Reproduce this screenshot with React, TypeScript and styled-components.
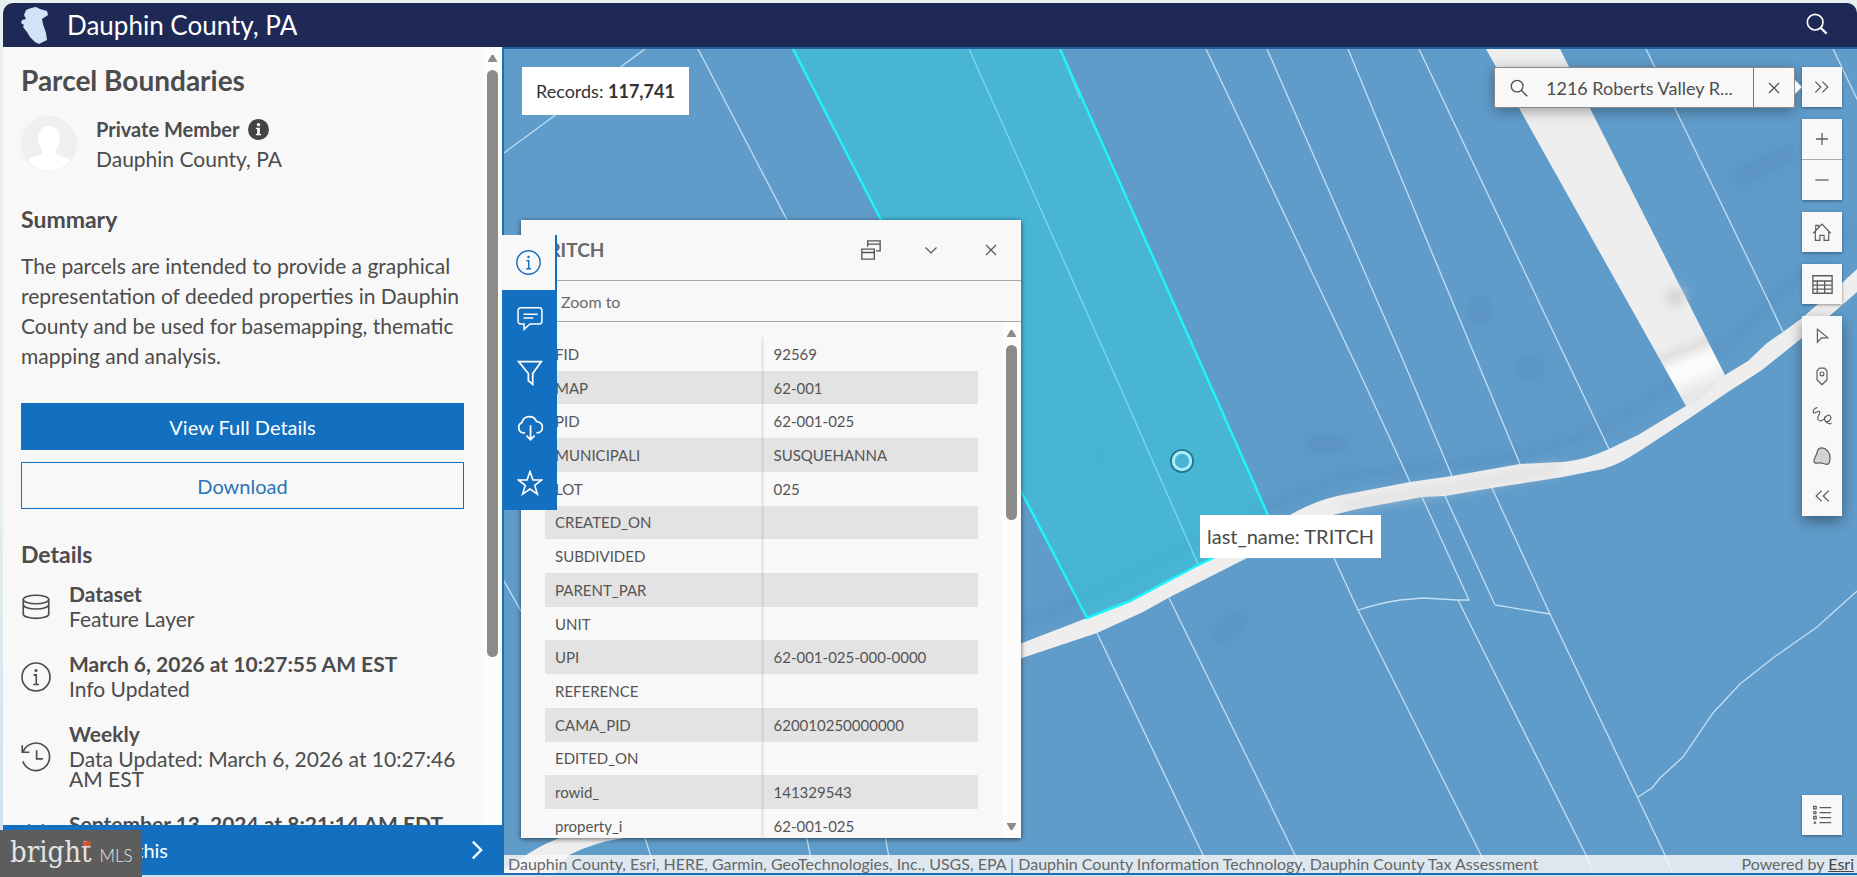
import React from "react";
import styled, { createGlobalStyle, css } from "styled-components";

const blue = "#136fbf";
const ink = "#4c4c4c";
const paper = "#f8f8f8";

const GlobalStyle = createGlobalStyle`
  * { box-sizing: border-box; }
  body { margin: 0; font-family: Lato, "Open Sans", sans-serif; color: ${ink}; background: #e9f0f0; }
  button, input { font: inherit; color: inherit; }
  button { border: 0; padding: 0; background: none; cursor: pointer; }
  h1, h2, h3, p { margin: 0; }
`;

const Page = styled.div`
  display: flex;
  flex-direction: column;
  height: 100vh;
  min-height: 480px;
  padding: 3px 0 2px 3px;
  overflow: hidden;
  background: linear-gradient(#e9f0f0 50%, #cfdfec 100%);
`;

const Header = styled.header`
  flex: none;
  display: flex;
  align-items: center;
  height: 44px;
  padding: 0 29px 0 17px;
  border-radius: 10px 10px 0 0;
  background: #1e2955;
  color: #fff;
`;

const SiteName = styled.a`
  display: flex;
  align-items: center;
  gap: 17px;
  margin-right: auto;
  font-size: 26px;
  line-height: 30px;
  color: inherit;
  text-decoration: none;
`;

const Body = styled.main`
  flex: 1;
  display: flex;
  min-height: 0;
`;

const Side = styled.aside`
  position: relative;
  flex: none;
  display: flex;
  flex-direction: column;
  width: 499px;
  background: ${paper};
`;

const SideScroll = styled.div`
  flex: 1;
  display: flex;
  min-height: 0;
  overflow: hidden;
`;

const SideContent = styled.div`
  flex: 1;
  padding: 17px 19px 0 18px;
`;

const ScrollTrack = styled.div`
  flex: none;
  display: flex;
  flex-direction: column;
  align-items: center;
  justify-content: space-between;
  width: 19px;
  padding: 8px 0;
  background: #fcfcfc;
`;

const ScrollTop = styled.div`
  display: flex;
  flex-direction: column;
  align-items: center;
  gap: 8px;
`;

const Thumb = styled.div<{ $length: number }>`
  width: 11px;
  height: ${(p) => p.$length}px;
  border-radius: 6px;
  background: #8b8b8b;
`;

const ScrollArrow = styled.div<{ $down?: boolean }>`
  width: 10px;
  height: 7px;
  background: #8b8b8b;
  clip-path: ${(p) =>
    p.$down ? "polygon(0 0, 100% 0, 60% 100%, 40% 100%)" : "polygon(40% 0, 60% 0, 100% 100%, 0 100%)"};
`;

const Title = styled.h1`
  font-size: 28px;
  line-height: 32px;
  font-weight: 700;
`;

const Member = styled.div`
  display: flex;
  align-items: center;
  gap: 19px;
  margin-top: 18px;
`;

const MemberText = styled.div`
  font-size: 21px;
  line-height: 30px;
`;

const MemberName = styled.div`
  display: flex;
  align-items: center;
  gap: 8px;
  font-size: 20px;
  font-weight: 700;
`;

const Heading = styled.h2`
  font-size: 23px;
  line-height: 26px;
  font-weight: 700;
`;

const Summary = styled.section`
  margin-top: 32px;
`;

const SummaryText = styled.p`
  margin-top: 19px;
  font-size: 21px;
  line-height: 30px;
`;

const Actions = styled.div`
  display: flex;
  flex-direction: column;
  gap: 12px;
  margin: 32px 0;
`;

const ActionButton = styled.button<{ $outline?: boolean }>`
  height: 47px;
  font-size: 20px;
  border: 1px solid ${blue};
  background: ${(p) => (p.$outline ? paper : blue)};
  color: ${(p) => (p.$outline ? "#2b74b5" : "#fff")};
`;

const DetailList = styled.ul`
  display: flex;
  flex-direction: column;
  gap: 20px;
  margin: 12px 0 0;
  padding: 0;
  list-style: none;
`;

const Detail = styled.li`
  display: flex;
  align-items: center;
  gap: 18px;
  font-size: 21px;
  line-height: 20px;

  svg { flex: none; margin-top: 6px; }
  strong { display: block; line-height: 30px; }
`;

const UseBar = styled.button`
  flex: none;
  display: flex;
  align-items: center;
  justify-content: space-between;
  height: 50px;
  padding: 0 15px;
  background: ${blue};
  color: #fff;
  font-size: 20px;
`;

const Rail = styled.nav`
  position: absolute;
  z-index: 3;
  top: 188px;
  left: 499px;
  width: 55px;
  display: flex;
  flex-direction: column;
  background: ${blue};
`;

const RailButton = styled.button<{ $active?: boolean }>`
  display: grid;
  place-items: center;
  height: 55px;
  color: #fff;
  ${(p) =>
    p.$active &&
    css`
      background: ${paper};
      color: ${blue};
      border-right: 2px solid ${blue};
    `}
`;

const MapView = styled.section`
  position: relative;
  flex: 1;
  min-width: 0;
  border: 2px solid #226cb0;
  border-right: 0;
  border-top-color: #285f9f;
  overflow: hidden;
  background: #609cca;
`;

const MapDrawing = styled.svg`
  position: absolute;
  inset: 0;
  width: 100%;
  height: 100%;
`;

const Records = styled.div`
  position: absolute;
  top: 18px;
  left: 18px;
  padding: 13px 14px;
  background: #fff;
  color: #323232;
  font-size: 18px;
  line-height: 22px;
`;

const Popup = styled.section`
  position: absolute;
  top: 171px;
  bottom: 35px;
  left: 17px;
  width: 500px;
  display: flex;
  flex-direction: column;
  background: ${paper};
  box-shadow: 0 1px 5px rgba(0, 0, 0, 0.6);
  color: #555;
`;

const PopupHead = styled.header`
  flex: none;
  display: flex;
  align-items: center;
  height: 61px;
  padding-left: 16px;
  border-bottom: 1px solid #a8a8a8;
`;

const PopupTitle = styled.h3`
  flex: 1;
  font-size: 19px;
  line-height: 24px;
  font-weight: 700;
  color: #6a6a6a;
`;

const HeadButton = styled.button`
  display: grid;
  place-items: center;
  width: 60px;
  height: 60px;
`;

const PopupActions = styled.div`
  flex: none;
  display: flex;
  align-items: center;
  height: 41px;
  padding-left: 40px;
  border-bottom: 1px solid #a8a8a8;
  font-size: 16px;
  color: #6a6a6a;
`;

const PopupScroll = styled.div`
  flex: 1;
  display: flex;
  min-height: 0;
  overflow: hidden;
`;

const PopupContent = styled.div`
  flex: 1;
  padding: 15px 24px 0;
`;

const Fields = styled.table`
  width: 100%;
  height: 506px;
  border-collapse: collapse;
  table-layout: fixed;
  font-size: 15px;
  line-height: 20px;

  tr:nth-child(even) { background: #e3e3e3; }
  th, td { padding: 0 10px; text-align: left; font-weight: 400; }
  th { width: 217px; border-right: 3px solid rgba(0, 0, 0, 0.06); }
`;

const MapTip = styled.div`
  position: absolute;
  top: 466px;
  left: 696px;
  padding: 8px 7px;
  background: #fff;
  color: #4a4a4a;
  font-size: 20px;
  line-height: 27px;
  white-space: nowrap;
`;

const Tools = styled.div`
  position: absolute;
  top: 18px;
  right: 15px;
  display: flex;
  flex-direction: column;
  gap: 12px;
`;

const ToolGroup = styled.div`
  display: flex;
  flex-direction: column;
  background: ${paper};
  box-shadow: 0 1px 3px rgba(0, 0, 0, 0.4);
`;

const ZoomGroup = styled(ToolGroup)`
  gap: 1px;
  background: #a9a9a9;
  button { background: ${paper}; }
`;

const SketchGroup = styled(ToolGroup)`
  box-shadow: 0 5px 14px rgba(0, 0, 0, 0.4);
`;

const Tool = styled.button`
  display: grid;
  place-items: center;
  width: 40px;
  height: 40px;
  color: #5c5c5c;
`;

const LegendCorner = styled(ToolGroup)`
  position: absolute;
  right: 15px;
  bottom: 38px;
`;

const SearchBox = styled.form`
  position: absolute;
  top: 18px;
  right: 62px;
  display: flex;
  align-items: center;
  width: 301px;
  height: 41px;
  border: 1px solid #8a8a8a;
  border-radius: 2px;
  background: ${paper};
  box-shadow: 0 3px 14px rgba(0, 0, 0, 0.35);
  color: #4f4f4f;

  &::after {
    content: "";
    position: absolute;
    top: 12px;
    right: -8px;
    width: 7px;
    height: 14px;
    background: ${paper};
    clip-path: polygon(0 0, 100% 50%, 0 100%);
  }
`;

const SearchGo = styled.button`
  display: grid;
  place-items: center;
  width: 48px;
  height: 39px;
`;

const SearchInput = styled.input`
  flex: 1;
  min-width: 0;
  padding: 0 0 0 3px;
  border: 0;
  outline: 0;
  background: none;
  font-size: 18px;
`;

const SearchClear = styled.button`
  display: grid;
  place-items: center;
  width: 41px;
  height: 39px;
  border-left: 1px solid #777;
`;

const Attribution = styled.footer`
  position: absolute;
  right: 0;
  bottom: 0;
  left: 0;
  display: flex;
  justify-content: space-between;
  height: 18px;
  padding: 0 3px 0 4px;
  background: rgba(248, 248, 248, 0.82);
  color: #666;
  font-size: 16px;
  line-height: 18px;
  white-space: nowrap;

  a { color: #444; }
`;

const Watermark = styled.div`
  position: absolute;
  z-index: 4;
  bottom: 0;
  left: 0;
  display: flex;
  align-items: baseline;
  gap: 8px;
  width: 142px;
  height: 47px;
  padding: 0 0 0 10px;
  background: #5d5d5d;
  color: #e4e4e4;
  font-size: 17px;
  line-height: 44px;
  font-weight: 300;
`;

const WatermarkName = styled.span`
  position: relative;
  font-family: "DejaVu Serif Condensed", "DejaVu Serif", serif;
  font-size: 29px;
  font-weight: 400;

  svg { position: absolute; top: 9px; right: 0; }
`;

type IconProps = { size?: number; width?: number; children: React.ReactNode };
const Icon = ({ size = 24, width = 1, children }: IconProps) => (
  <svg width={size} height={size} viewBox="0 0 24 24" fill="none" stroke="currentColor" strokeWidth={width} aria-hidden="true">
    {children}
  </svg>
);

const InfoShape = () => (
  <>
    <circle cx="12" cy="12" r="11.2" />
    <circle cx="12" cy="6.7" r="1.2" fill="currentColor" stroke="none" />
    <path d="M10 10.3h2.2v7.6M9.8 18h4.6" />
  </>
);

const CrossIcon = () => (
  <Icon size={12} width={2.4}>
    <path d="M2 2l20 20M22 2L2 22" />
  </Icon>
);

const details = [
  {
    title: "Dataset",
    text: "Feature Layer",
    icon: (
      <Icon size={30} width={1.3}>
        <ellipse cx="12" cy="6" rx="10.2" ry="3.4" />
        <path d="M1.8 6v11.500c0 2 4.500 3.600 10.200 3.600s10.200-1.600 10.200-3.600V6M1.800 10c0 2 4.500 3.600 10.200 3.600s10.200-1.600 10.200-3.600" />
      </Icon>
    ),
  },
  {
    title: "March 6, 2026 at 10:27:55 AM EST",
    text: "Info Updated",
    icon: <Icon size={30} width={1.3}><InfoShape /></Icon>,
  },
  {
    title: "Weekly",
    text: "Data Updated: March 6, 2026 at 10:27:46 AM EST",
    icon: (
      <Icon size={30} width={1.3}>
        <path d="M1.800 7.500A11 11 0 1 1 1.500 15.500M1 2.500v5.700h5.700M12.500 6.500v7h5" />
      </Icon>
    ),
  },
  {
    title: "September 13, 2024 at 8:21:14 AM EDT",
    text: "Published Date",
    icon: (
      <Icon size={30} width={1.3}>
        <path d="M2 4.500h20v17H2zM2 9h20M6.500 1.500v5M17.500 1.500v5" />
      </Icon>
    ),
  },
];

const fields: [string, string][] = [
  ["FID", "92569"],
  ["MAP", "62-001"],
  ["PID", "62-001-025"],
  ["MUNICIPALI", "SUSQUEHANNA"],
  ["LOT", "025"],
  ["CREATED_ON", ""],
  ["SUBDIVIDED", ""],
  ["PARENT_PAR", ""],
  ["UNIT", ""],
  ["UPI", "62-001-025-000-0000"],
  ["REFERENCE", ""],
  ["CAMA_PID", "620010250000000"],
  ["EDITED_ON", ""],
  ["rowid_", "141329543"],
  ["property_i", "62-001-025"],
];

const sketchTools = [
  { label: "Select", icon: <path d="M6.500 4v15.500l4.500-5 8-.5z" /> },
  {
    label: "Draw a point",
    icon: (
      <>
        <path d="M6 6l3-3.500h6L18 6v10.500l-6 6-6-6z" strokeLinejoin="round" />
        <circle cx="12" cy="9.500" r="2.300" />
      </>
    ),
  },
  {
    label: "Draw a polyline",
    icon: <path d="M6.500 2c-2.500 0-5.500 3-5 5.500 1 3 5.500-2.500 7.500-1 2 2-4 7-1.500 10 2 2.500 5.500 1 7.500-1.500s4-5.500 6.500-3.500c2.500 2.300.5 7.300-3.500 7.300-3.300 0-4-3.800-2-6.300M15 16c1.500 4 5 6.500 8.500 4.800" />,
  },
  {
    label: "Draw a polygon",
    icon: <path d="M6.500 6.500c.5-2.500 2.500-4.200 5.500-4.200 4.500 0 9.500 5 9.700 11.500.1 4-.7 8.200-4.200 8.200-3.500 0-5-2-8-1.700-3 .3-7 1.200-7.300-1.800C2 14.500 6 11 6.500 6.500z" fill="#d2d2d2" />,
  },
  { label: "Collapse toolbar", icon: <path d="M11.500 5.500L5 12l6.500 6.500M20 5.500L13.500 12l6.500 6.500" strokeWidth="1.500" /> },
];

const roadPath =
  "M480 885L526 855Q545 843 562 837Q760 740 1022 643L1087 618L1130 601L1198 566L1250 536L1290 515Q1312 502 1337 496L1410 482L1452 476L1520 464L1563 462Q1585 460 1609 449L1638 435L1686 406L1725 375L1748 361L1767 343L1783 332L1802 318L1842 283L1900 229L1900 255L1857 292L1833 313L1762 370L1728 392L1687 420L1638 452Q1618 465 1603 469L1563 477L1492 488L1445 496L1422 497L1357 509L1333 515L1247 558L1170 597L1143 612L1097 633L1022 658Q760 760 624 838Q595 842 569 855L545 885Z";

const parcelLines =
  "M504 153L645 49M698 49L787 220L1000 560M969 49L1050 230L1117 380L1198 564M1060 49L1080 98" +
  "M1206 49L1363 380L1410 482M1267 49L1400 353L1452 476M1348 49L1435 260L1520 464M1419 49L1519 260L1609 449" +
  "M1646 49L1768 300L1783 332M1833 49L1857 99L1880 150M504 581L521 611L560 690M640 825L645 838L656 873" +
  "M804 825L814 873M883 825L892 873M1097 633L1203 855L1212 873M1169 598L1295 855L1304 873" +
  "M1334 558L1358 610L1481 855L1490 873M1358 610Q1380 603 1400 600L1423 598L1440 599L1457 600L1469 600L1422 497" +
  "M1458 600L1586 855L1593 873M1445 496L1495 605L1550 614M1492 488L1550 614L1665 855L1673 873" +
  "M1638 797L1652 788L1660 778L1683 757L1713 713L1740 684L1773 658L1817 627L1847 600L1890 562";

const ParcelMap = () => (
  <MapDrawing viewBox="504 49 1353 824" preserveAspectRatio="xMinYMin slice" role="img" aria-label="Parcel map">
    <defs>
      <filter id="soft" filterUnits="userSpaceOnUse" x="504" y="49" width="1353" height="824">
        <feGaussianBlur stdDeviation="6" />
      </filter>
      <linearGradient id="strip" gradientUnits="userSpaceOnUse" x1="1685" y1="338" x2="1706" y2="388">
        <stop offset="0" stopColor="#eee" />
        <stop offset="0.200" stopColor="#e0e0e0" />
        <stop offset="0.450" stopColor="#fbfbfb" />
        <stop offset="0.650" stopColor="#fbfbfb" />
        <stop offset="1" stopColor="#e8e8e8" />
      </linearGradient>
    </defs>
    <g filter="url(#soft)" fill="none" stroke="#3b6fa5">
      <path
        d="M1022 625L1130 575L1250 515L1340 476L1520 456L1600 430L1700 366L1857 225"
        strokeOpacity="0.200"
        strokeWidth="9"
      />
      <path
        d="M1305 444h45M1480 295v30M1515 368h30M1215 640l30-25M1092 455h14M1735 180l60-30"
        strokeWidth="20"
        strokeOpacity="0.180"
      />
    </g>
    <path d={roadPath} fill="#eee" />
    <path d="M1340 506L1460 486L1560 468" stroke="#d9d6d6" strokeWidth="5" fill="none" filter="url(#soft)" />
    <path d="M1486 49L1560 49L1687 300L1725 375L1700 400L1686 406L1604 260Z" fill="url(#strip)" />
    <circle cx="1675" cy="297" r="9" fill="#cfcfcf" filter="url(#soft)" />
    <path d={parcelLines} fill="none" stroke="#c3dff3" strokeWidth="1.300" />
    <path
      d="M793 49L881 220L1022 493L1087 618L1130 601L1198 565L1217 556L1273 527L1268 515L1208 380L1060 49"
      fill="#2fd2e0"
      fillOpacity="0.480"
      stroke="#1ff3fb"
      strokeWidth="2.500"
    />
    <circle cx="1182" cy="461" r="11" fill="none" stroke="#23758c" strokeWidth="2" />
    <circle cx="1182" cy="461" r="8.700" fill="#49b4d8" stroke="#a9edf8" strokeWidth="3" />
  </MapDrawing>
);

export default function App() {
  return (
    <>
      <GlobalStyle />
      <Page>
        <Header>
          <SiteName href="#home">
            <svg width="30" height="38" viewBox="0 0 30 38" aria-hidden="true">
              <path d="M6 4l5-2 5-1 4 2 7 2 1 4-6 4 1 5 3 9 1 7-8 4-4-2-5-5-3-5-4-5 1-2-3-2 1-3 4-1-2-4z" fill="#d3e3f7" />
            </svg>
            Dauphin County, PA
          </SiteName>
          <button aria-label="Search">
            <Icon size={22} width={1.800}>
              <circle cx="10" cy="10" r="8.500" />
              <path d="M16 16l6.500 6.500" strokeWidth="2.400" />
            </Icon>
          </button>
        </Header>

        <Body>
          <Side>
            <SideScroll>
              <SideContent>
                <Title>Parcel Boundaries</Title>
                <Member>
                  <svg width="56" height="56" viewBox="0 0 56 56" aria-hidden="true">
                    <clipPath id="face"><circle cx="28" cy="28" r="27" /></clipPath>
                    <circle cx="28" cy="28" r="28" fill="#efefef" />
                    <g clipPath="url(#face)" fill="#fff">
                      <path d="M28 10c7 0 11 5 11 12 0 5-2 9-4 11v4c2 4 16 4 19 12v10H2V49c3-8 17-8 19-12v-4c-2-2-4-6-4-11 0-7 4-12 11-12z" />
                    </g>
                  </svg>
                  <MemberText>
                    <MemberName>
                      Private Member
                      <svg width="21" height="21" viewBox="0 0 24 24" aria-hidden="true">
                        <circle cx="12" cy="12" r="12" fill="#444" />
                        <circle cx="12" cy="6.500" r="1.900" fill="#fff" />
                        <path d="M9 10h4.500v7H15v1.500H9V17h1.500v-5.500H9z" fill="#fff" />
                      </svg>
                    </MemberName>
                    <div>Dauphin County, PA</div>
                  </MemberText>
                </Member>
                <Summary>
                  <Heading>Summary</Heading>
                  <SummaryText>
                    The parcels are intended to provide a graphical representation of deeded properties in Dauphin
                    County and be used for basemapping, thematic mapping and analysis.
                  </SummaryText>
                </Summary>
                <Actions>
                  <ActionButton>View Full Details</ActionButton>
                  <ActionButton $outline>Download</ActionButton>
                </Actions>
                <Heading>Details</Heading>
                <DetailList>
                  {details.map((d) => (
                    <Detail key={d.title}>
                      {d.icon}
                      <div>
                        <strong>{d.title}</strong>
                        {d.text}
                      </div>
                    </Detail>
                  ))}
                </DetailList>
              </SideContent>
              <ScrollTrack>
                <ScrollTop>
                  <ScrollArrow />
                  <Thumb $length={587} />
                </ScrollTop>
              </ScrollTrack>
            </SideScroll>
            <UseBar>
              I want to use this
              <Icon size={20} width={2.800}>
                <path d="M7 2l10 10L7 22" />
              </Icon>
            </UseBar>

            <Rail aria-label="Panels">
              <RailButton $active aria-label="About">
                <Icon size={25} width={1.400}><InfoShape /></Icon>
              </RailButton>
              <RailButton aria-label="Comments">
                <Icon size={26} width={1.400}>
                  <path d="M3.500 2.500h17a2.500 2.500 0 0 1 2.500 2.500v10a2.500 2.500 0 0 1-2.500 2.500H12l-5.500 5v-5h-3A2.500 2.500 0 0 1 1 15V5a2.500 2.500 0 0 1 2.500-2.500zM6 8.500h13M6 12h9" />
                </Icon>
              </RailButton>
              <RailButton aria-label="Filters">
                <Icon size={26} width={1.600}>
                  <path d="M1.500 1.500h21L14.500 12.500v10l-4-3.500v-6.500z" />
                </Icon>
              </RailButton>
              <RailButton aria-label="Download">
                <Icon size={26} width={1.600}>
                  <path d="M7.500 16.500H6a5 5 0 0 1-1.500-9.500C5.500 3 8.500 1.500 11.500 1.500c3.500 0 5.500 2 6.500 4.500 3.500.5 5.500 2.500 5.500 5.500 0 2.800-2 5-5.500 5M12.500 9.500v13M8.700 19l3.800 3.800 3.800-3.800" />
                </Icon>
              </RailButton>
              <RailButton aria-label="Favorite">
                <Icon size={26} width={1.500}>
                  <path d="M12 1.500l2.700 7.700h8.100l-6.400 5 2.400 8L12 17.500l-6.800 4.700 2.400-8-6.400-5h8.100z" />
                </Icon>
              </RailButton>
            </Rail>
          </Side>

          <MapView>
            <ParcelMap />
            <Records>Records: <strong>117,741</strong></Records>

            <Popup>
              <PopupHead>
                <PopupTitle>TRITCH</PopupTitle>
                <HeadButton aria-label="Dock">
                  <Icon size={20} width={1.600}>
                    <path d="M1 11h15v12H1zM1 15h15M8 8V1h15v12h-5M8 5h15" />
                  </Icon>
                </HeadButton>
                <HeadButton aria-label="Collapse">
                  <Icon size={12} width={2.400}><path d="M1 7l11 11L23 7" /></Icon>
                </HeadButton>
                <HeadButton aria-label="Close"><CrossIcon /></HeadButton>
              </PopupHead>
              <PopupActions><button>Zoom to</button></PopupActions>
              <PopupScroll>
                <PopupContent>
                  <Fields>
                    <tbody>
                      {fields.map(([name, value]) => (
                        <tr key={name}>
                          <th scope="row">{name}</th>
                          <td>{value}</td>
                        </tr>
                      ))}
                    </tbody>
                  </Fields>
                </PopupContent>
                <ScrollTrack>
                  <ScrollTop>
                    <ScrollArrow />
                    <Thumb $length={175} />
                  </ScrollTop>
                  <ScrollArrow $down />
                </ScrollTrack>
              </PopupScroll>
            </Popup>

            <MapTip>last_name: TRITCH</MapTip>

            <SearchBox onSubmit={(e) => e.preventDefault()}>
              <SearchGo aria-label="Find address">
                <Icon size={18} width={1.700}>
                  <circle cx="9.500" cy="9.500" r="7.800" />
                  <path d="M15 15l8 8" />
                </Icon>
              </SearchGo>
              <SearchInput aria-label="Address or place" defaultValue="1216 Roberts Valley R..." />
              <SearchClear type="button" aria-label="Clear"><CrossIcon /></SearchClear>
            </SearchBox>

            <Tools>
              <ToolGroup>
                <Tool aria-label="Collapse search">
                  <Icon size={20} width={1.500}><path d="M4 5.500l6.500 6.500L4 18.500M12.500 5.500L19 12l-6.500 6.500" /></Icon>
                </Tool>
              </ToolGroup>
              <ZoomGroup>
                <Tool aria-label="Zoom in">
                  <Icon size={16} width={1.900}><path d="M12 3v18M3 12h18" /></Icon>
                </Tool>
                <Tool aria-label="Zoom out">
                  <Icon size={16} width={1.900}><path d="M2 12h20" /></Icon>
                </Tool>
              </ZoomGroup>
              <ToolGroup>
                <Tool aria-label="Default view">
                  <Icon size={20} width={1.400}>
                    <path d="M1.500 13.500L12 2.500l10.500 11M4 11.500v10.500h5.500v-6h5v6H20V11.500M4.500 10V4h3.500v2.500" />
                  </Icon>
                </Tool>
              </ToolGroup>
              <ToolGroup>
                <Tool aria-label="Attribute table">
                  <Icon size={21} width={1.500}>
                    <path d="M1 2h22v20H1zM1 8h22M1 12.700h22M1 17.300h22M6 8v14M14.500 8v14" />
                  </Icon>
                </Tool>
              </ToolGroup>
              <SketchGroup>
                {sketchTools.map((t) => (
                  <Tool key={t.label} aria-label={t.label}>
                    <Icon size={20} width={1.400}>{t.icon}</Icon>
                  </Tool>
                ))}
              </SketchGroup>
            </Tools>

            <LegendCorner>
              <Tool aria-label="Legend">
                <Icon size={20} width={1.500}>
                  <path d="M9 3h14M9 9h14M9 15h14M9 21h14" />
                  <path d="M2 1.700h3v3H2zM2 13.700h3v3H2z" />
                  <circle cx="3.500" cy="9" r="1.500" />
                  <path d="M1.500 22.500l2-3.500 2 3.500z" fill="currentColor" stroke="none" />
                </Icon>
              </Tool>
            </LegendCorner>

            <Attribution>
              <span>
                Dauphin County, Esri, HERE, Garmin, GeoTechnologies, Inc., USGS, EPA | Dauphin County Information
                Technology, Dauphin County Tax Assessment
              </span>
              <span>Powered by <a href="#esri">Esri</a></span>
            </Attribution>
          </MapView>
        </Body>
      </Page>
      <Watermark>
        <WatermarkName>
          bright
          <svg width="10" height="8" viewBox="0 0 10 8" aria-hidden="true">
            <path d="M5 0l1 2.500 3.500.5-1.500 2 .5 2.500L5 6.500 1.500 7.500 2 5 .5 3 4 2.500z" fill="#d9532c" />
          </svg>
        </WatermarkName>
        MLS
      </Watermark>
    </>
  );
}
